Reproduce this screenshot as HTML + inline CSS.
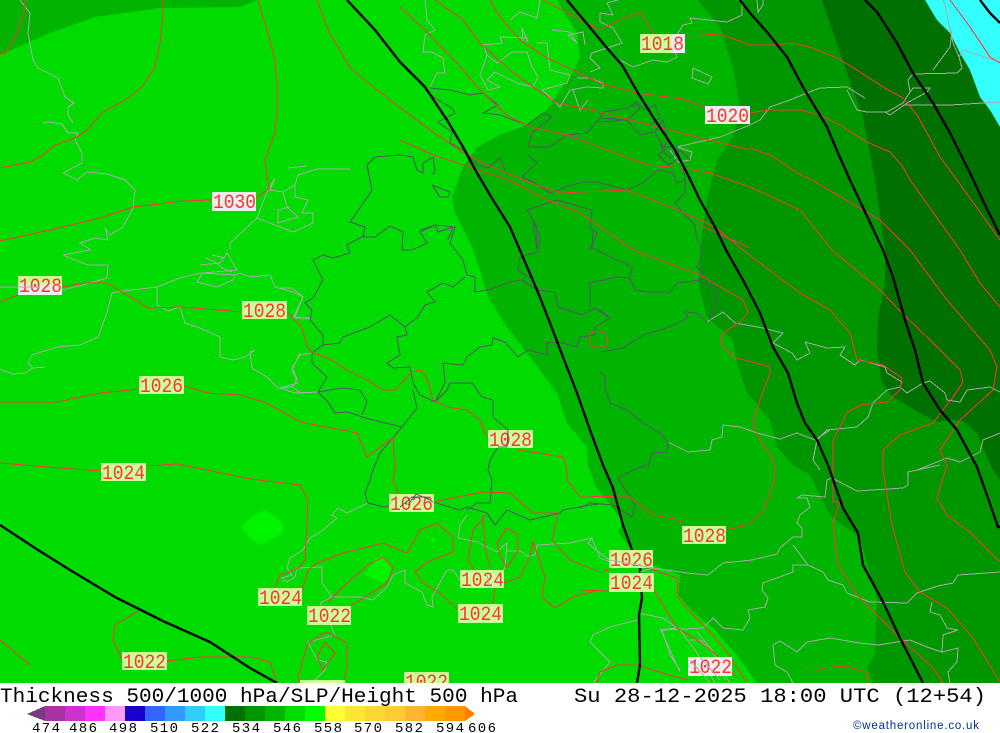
<!DOCTYPE html>
<html><head><meta charset="utf-8"><style>
html,body{margin:0;padding:0;background:#fff;width:1000px;height:733px;overflow:hidden}
svg{position:absolute;left:0;top:0;display:block}
.l text{font-family:"Liberation Mono",monospace;font-size:20px;fill:#ff3333}
.t{font-family:"Liberation Mono",monospace;font-size:20px;fill:#000}
.n{font-family:"Liberation Mono",monospace;font-size:14px;fill:#000}
</style></head><body>
<svg width="1000" height="733" viewBox="0 0 1000 733" xmlns="http://www.w3.org/2000/svg">
<svg x="0" y="0" width="1000" height="683" viewBox="0 0 1000 683">
<rect width="1000" height="683" fill="#00dc00"/>
<polygon fill="#00b400" points="0,0 257,0 240,7 160,8 95,17 50,33 0,55"/>
<polygon fill="#00b400" points="557,0 577,33 580,57 573,72 560,90 547,110 527,125 500,135 477,147 463,167 452,197 455,213 472,247 480,270 488,297 507,327 530,357 557,393 567,423 587,447 588,465 595,485 623,522 618,532 630,548 653,565 680,575 678,595 693,612 713,628 737,655 757,683 1000,683 1000,0"/>
<polygon fill="#009600" points="698,0 720,27 733,67 740,107 733,137 717,160 707,200 703,227 700,250 699,287 707,317 733,340 737,363 747,393 770,420 777,447 793,465 810,475 820,495 830,515 860,538 877,598 875,655 867,668 873,683 1000,683 1000,0"/>
<polygon fill="#007000" points="822,0 847,73 863,117 875,180 885,250 885,283 878,317 877,350 882,383 893,397 920,413 937,422 950,420 963,421 977,433 987,457 993,470 1000,480 1000,0"/>
<polygon fill="#33ffff" points="925,0 937,20 950,33 960,53 970,70 980,97 990,110 1000,127 1000,0"/>
<polygon fill="#00f400" points="241,527 250,518 265,510 283,523 283,533 260,545 250,538"/>
<polygon fill="#00f400" points="375,558 383,556 392,567 390,577 382,583 365,575"/>
<polygon fill="#00f400" points="433,537 436,540 433,543 430,540"/>

<g fill="none" stroke="#aaaaaa" stroke-width="1" shape-rendering="crispEdges">
<path d="M20 0 30 13 28 33 33 60 38 68 58 78 65 97 74 103 68 107 68 115 73 123"/>
<path d="M43 123 48 122 62 124 68 133 78 133 75 140 82 153 82 163 63 173 77 180 87 172 107 174 125 180 135 190 133 208 123 227 110 235 105 228 108 240 95 238 80 243 91 250"/>
<path d="M230 250 230 243 257 218 267 192 275 178 270 190 283 192 295 185 298 175 317 169 350 169"/>
<path d="M257 218 293 232 313 223 313 213 302 213 308 200 295 197 295 185"/>
<path d="M283 192 287 207 298 217 278 223 278 210 290 207"/>
<path d="M288 168 307 166"/>
<path d="M63 255 90 250M63 255 75 260 88 265 108 265 107 278 83 285 50 293 18 287 0 287"/>
<path d="M45 367 33 368 28 363 32 355 57 347 80 345 98 337 107 313 112 293 123 291 157 287 180 278 200 273 235 275 240 273 250 277 270 275 275 287 293 292 303 297 293 318 310 318"/>
<path d="M0 369 13 374 25 373 33 368"/>
<path d="M157 287 157 305 168 311 180 307 185 323 200 328 220 337 220 357 233 360 245 357 255 350 250 352 252 368 267 377 278 388 293 387 297 378 292 368 300 355 312 353"/>
<path d="M293 387 300 393 317 392"/>
<path d="M200 265 220 263 227 253 233 263 237 270 203 273 197 282 217 287 233 280 235 275"/>
<path d="M205 258 215 262 222 268 232 272M212 255 225 258"/>
<path d="M280 288 292 288 303 297 295 317 310 319"/>
<path d="M292 370 300 353M292 370 298 383 280 388 295 393 318 392"/>
<path d="M425 0 427 20 435 30 425 35 423 52 432 52 443 58 445 73 437 73 430 87"/>
<path d="M487 55 480 75 488 90 500 87 487 80 495 72 517 83 533 87 538 77 532 67 527 52 512 52 497 63 487 55 483 45 502 43 500 37 528 38"/>
<path d="M510 20 520 12 537 18 540 0"/>
<path d="M523 42 522 28 528 42"/>
<path d="M537 43 547 43 550 70 570 75 567 83 542 90 550 97 560 107 570 90 587 87 603 88 603 83 590 78 577 78"/>
<path d="M573 90 580 110 588 100"/>
<path d="M590 72 600 68 590 58 592 53 622 43 613 28 600 22 600 13 613 15 607 3 618 0"/>
<path d="M552 30 570 32 577 43 568 35 583 32 585 45"/>
<path d="M620 60 633 67 653 60 667 62 677 57 672 43 683 25 692 23 690 18 727 22 742 15 742 0"/>
<path d="M693 68 692 78 708 84 712 77 693 68"/>
<path d="M677 147 692 152 690 160 678 162 670 150"/>
<path d="M677 147 720 137 750 125 760 120 770 107 790 100 807 93 820 88 847 87 865 98"/>
<path d="M847 90 857 110 867 112 887 112 903 103 910 92 908 80 913 74 957 73 962 68 959 57 963 50 1000 62"/>
<path d="M952 30 950 47 933 70M945 5 943 0M945 5 953 43 959 57"/>
<path d="M885 112 890 115 907 103 927 92 930 88 913 88 910 92"/>
<path d="M905 105 950 105 1000 102"/>
<path d="M757 0 758 12 763 5 763 0"/>
<path d="M707 322 723 312 735 323 763 328 783 333 773 343 792 353 797 360 810 353 805 342 827 348 845 347 840 355 855 365 860 360 885 367 887 373 902 382 900 387 887 390 873 403 868 417 857 427 827 430 817 440 813 460 820 470"/>
<path d="M900 387 907 393 923 383 930 381 945 393 947 400 960 402 967 390 990 387 1000 392"/>
<path d="M1000 433 983 440 980 452 960 462 947 458 917 470"/>
<path d="M668 442 688 452 710 450 712 440 722 437 723 425 740 427 757 433 780 439 797 433 815 440 830 430"/>
<path d="M592 538 600 558 610 562 653 568 687 573 708 575 723 563 752 560 777 554 780 548 793 537 802 537 802 528 797 523 800 515 810 507 807 498 797 498 802 495 825 497 827 480 832 478 857 491 903 488 908 485 908 472 940 465"/>
<path d="M793 545 808 565 793 565 793 572 763 583 762 590 768 598 765 607 748 610 750 618 743 630 723 628 713 618 703 628 662 630 670 655 680 670"/>
<path d="M808 565 823 572 828 580 843 585 847 593 870 602 907 603 917 593 938 586 953 583 958 575 1000 572"/>
<path d="M932 602 930 612 940 615 947 628 958 630 943 635 942 652 958 648 957 662 948 672 950 683"/>
<path d="M773 645 775 665 787 672 793 683M773 645 780 641 797 652 807 642 830 638 860 643 878 645 910 640 927 647 942 652"/>
<path d="M638 613 663 618 677 628 660 630M590 642 593 635 610 627 637 620M590 642 610 662 593 683"/>
<path d="M660 628 680 672M680 630 695 650 705 665 715 683M697 632 712 650 722 670 730 683M690 640 700 640 715 655 725 680"/>
<path d="M368 503 347 513 338 508 332 515 337 518 323 530 310 538 303 550 290 558 287 568 292 575 282 578 287 582 295 577 297 568 322 567 322 583 332 597 320 603 330 623 335 635 308 642 317 660 327 662 325 670 315 680 316 683"/>
<path d="M330 597 360 597 373 600 387 587 393 575 405 570 405 583 422 592 427 605 433 607 432 597 447 570 453 570 460 580 488 587 505 568 507 543 497 552 477 542 458 538 460 525 467 515"/>
<path d="M507 551 520 551 527 556 535 555 537 545 570 543 592 538 588 543 600 553 612 562"/>
</g>

<g fill="none" stroke="#555566" stroke-width="1" shape-rendering="crispEdges">
<path d="M400 155 375 157 367 165 372 190 355 215 350 222 365 227 363 237 375 237 390 226 403 232 402 250 412 250 427 243 420 232 435 225 455 227 450 243 463 260 467 275 475 277 475 292 488 290 510 282 522 280 537 290 555 292 558 307 582 315 595 308 610 318 595 327 595 335 580 337 577 347 558 342 547 343 547 355 528 350 518 357 505 342 493 338 492 345 480 347 467 357 463 365 443 363 445 383 435 402 420 395 413 383 410 367 393 368 387 363 400 355 397 337 407 335 405 327 417 318 425 305 435 302 427 292 443 283 453 287 465 277"/>
<path d="M365 235 347 245 350 253 333 258 323 255 313 260 323 280 313 298 305 303 312 310 310 320 323 335 323 345 312 353 312 363 327 377 318 392 328 402 335 413 348 412 362 417 373 420 402 427 417 408 413 390"/>
<path d="M323 345 340 343 343 337 370 327 390 315 405 327"/>
<path d="M318 392 343 388 360 390 367 402 362 415"/>
<path d="M402 427 380 453 373 470 370 480 365 493 368 503 383 507 433 502 460 510 467 507 487 513 495 525 507 510 530 520 560 513 563 510 590 505 600 504 613 505 632 517 635 505 630 497 618 478 633 470 647 465"/>
<path d="M492 480 490 503 477 503 467 510"/>
<path d="M435 402 447 390 450 383 458 383 472 383 482 397 493 400 493 417 508 430 507 447 498 447 490 460 488 470 492 480"/>
<path d="M430 88 450 90 470 95 483 93 498 105 483 113 500 115 527 125 543 113 552 117 532 133 528 147 550 147 567 135 587 133 600 118 627 120 640 135 655 132 663 147 677 147 685 177 685 193 675 203 683 213 695 225 697 240 703 250 697 267 703 273 700 280"/>
<path d="M528 155 537 163 522 177 533 182 550 193 563 188 583 182 597 182 627 190 643 183 658 170 673 173 677 183 685 180"/>
<path d="M527 210 557 200 592 210 590 227 597 233 590 250"/>
<path d="M527 210 537 227 537 250 533 220M520 257 538 252 540 237 533 220"/>
<path d="M520 257 518 270 530 278"/>
<path d="M593 230 592 248 617 260 632 267 630 278 617 277 590 283 590 307"/>
<path d="M630 278 635 290 647 292 670 292 677 283 700 280 715 288 717 300 710 320"/>
<path d="M600 310 610 318"/>
<path d="M600 352 623 348 643 335 667 328 688 318 685 312 697 313 707 322"/>
<path d="M600 372 605 377 605 387 610 403 627 410 643 423 660 433 668 442 667 452 652 453 648 468"/>
<path d="M425 90 438 100 452 108 455 113 438 122 452 132 450 143 463 150 478 165 488 168 500 158 505 170"/>
<path d="M400 155 413 157 417 170 423 173 423 163 433 157 435 170 433 175"/>
<path d="M432 185 450 192 448 197 440 197 432 185"/>
<path d="M420 230 435 225 438 232 453 227 448 240"/>
<path d="M600 118 603 112 628 108 636 102 640 108 630 118 625 120 600 122M633 107 638 103 645 110 655 105 660 118 650 125M655 132 663 120 668 140 662 150 670 158 680 150 690 160"/>
<path d="M660 145 665 150 658 155 668 165 680 158"/>
<path d="M580 508 590 503 613 505"/>
</g>

<g fill="none" stroke="#ff3340" stroke-width="1" shape-rendering="crispEdges">
<path d="M25 0 24 13 17 33 5 54 0 54"/>
<path d="M162 0 163 17 160 43 155 67 142 87 122 102 103 112 87 130 75 138 55 145 43 155 30 162 0 168"/>
<path d="M258 0 267 30 275 60 278 97 275 133 265 160 268 183 270 188 256 198"/>
<path d="M212 200 183 201 133 207 100 218 50 230 0 241"/>
<path d="M317 0 328 30 350 68 390 100 433 132 462 152 487 165 528 182 560 193 627 190 673 208 715 227 743 250 773 273 800 293 830 310 850 333 857 360 883 365 902 378 900 390 887 402 860 405 847 413 833 440 833 502 840 502 833 522 837 562 857 595 897 635 933 668 943 683"/>
<path d="M400 7 425 30 457 63 480 90 507 115 530 127 567 135 607 150 648 165 683 168 710 173 750 187 800 210 832 250 880 290 902 313 933 343 960 370 963 382 953 397 943 410 933 423 900 435 883 450 883 470 892 525 905 572 920 592 947 608 973 638 1000 682"/>
<path d="M435 0 463 20 480 43 510 70 533 87 557 103 600 112 657 127 700 138 750 150"/>
<path d="M490 0 500 17 520 40 547 58 573 70 600 83 637 93 683 99 710 110"/>
<path d="M400 140 433 155 473 168 513 182 543 198 580 213 633 250 700 275 743 300 748 312 740 322 723 333 720 343 733 357 770 367 770 373 760 400 752 423 760 440 772 457 775 470 774 482 763 512 747 525 726 530"/>
<path d="M543 0 585 22 600 30 620 20 640 12 653 33"/>
<path d="M685 36 720 34 750 45 770 45 793 43 813 48 837 58 857 70 883 87 903 98 917 115 927 133 940 157 957 180 1000 240"/>
<path d="M750 113 767 110 800 110 820 115 840 125 867 142 890 152 903 167 910 180 935 215 960 250 980 283 1000 307"/>
<path d="M750 148 770 155 783 163 797 173 812 180 880 220 910 250 947 300 990 350 997 367 993 390 960 420 940 450 947 465 937 498 947 515 973 535 1000 562"/>
<path d="M750 248 700 225"/>
<path d="M950 0 970 27 990 57 1000 63"/>
<path d="M0 302 18 295M62 287 85 283 107 283 127 295 148 308 180 307 242 312"/>
<path d="M287 312 302 327 307 347 313 353 328 358 347 370 367 380 383 390 395 390 412 372 420 370 427 378 433 400 447 407 467 410 480 420 487 437"/>
<path d="M518 450 563 457 567 470 567 480 580 497 628 496 653 515 680 520 682 526"/>
<path d="M0 402 57 402 100 393 139 389"/>
<path d="M184 386 207 393 240 395 267 403 300 422 357 433 367 457 380 447 393 438 395 470 393 480 398 493"/>
<path d="M433 502 483 492 510 493 533 513 558 513 552 540 570 560 600 572 609 570"/>
<path d="M580 590 609 591"/>
<path d="M0 463 60 468 101 471M146 466 177 464 207 470 250 479 300 485 308 500 305 560 300 567 287 573 280 575 275 588"/>
<path d="M350 606 365 597 387 583 393 568 383 557 368 565 347 583 328 602"/>
<path d="M300 597 308 570 317 563 343 553 383 543 407 553 420 530 437 523 453 537 453 552 427 562 415 572 423 583 440 593 457 609"/>
<path d="M486 515 473 530 468 560 474 570M483 515 485 547 490 567"/>
<path d="M507 528 497 543 500 555 507 568M507 528 518 535 518 550 507 568"/>
<path d="M504 583 520 577 530 557 533 542 545 577 542 597 555 608 573 597 600 590"/>
<path d="M495 587 493 604"/>
<path d="M647 568 677 578 678 598 693 615 713 635 727 652 747 683"/>
<path d="M653 588 663 605 677 628 700 642 720 658 737 678"/>
<path d="M327 632 347 643 347 667 343 683M327 632 308 643 298 677 300 683"/>
<path d="M325 642 335 653 323 670 317 657 325 642"/>
<path d="M166 661 200 657 250 657 270 662 277 682M122 660 113 640 115 625 140 610"/>
<path d="M0 640 30 665"/>
<path d="M597 683 600 672 617 665 637 665 663 673 688 680"/>
<path d="M813 672 823 668 847 666 867 673 868 683"/>
<path d="M590 333 598 331 606 334 608 342 604 347 594 347 589 342 590 333"/>
</g>

<g fill="none" stroke="#000" stroke-width="2.4" stroke-linejoin="round">
<path d="M347 0 375 30 400 62 425 87 447 120 463 147 477 173 493 200 510 227 522 255 537 290 550 323 563 357 577 393 590 430 603 465 613 488 623 525 632 550 640 568 642 598 639 615 640 665 637 683"/>
<path d="M567 0 588 25 607 48 622 65 638 93 653 117 675 150 687 173 700 200 715 227 726 250 743 280 760 313 773 347 788 373 797 403 805 423 817 440 828 465 843 508 858 533 863 565 883 602 900 638 923 683"/>
<path d="M740 0 750 13 767 32 787 57 803 87 827 127 838 153 850 180 883 250 893 277 905 320 915 350 923 383 940 410 957 430 977 467 988 498 998 527 1000 527"/>
<path d="M865 0 877 12 897 43 913 73 933 103 950 133 970 173 985 205 1000 235"/>
<path d="M980 0 990 13 1000 23"/>
<path d="M0 525 35 548 70 570 115 597 165 622 210 642 250 668 277 683"/>
</g>

<g shape-rendering="crispEdges">
<rect x="640" y="34" width="32" height="19" fill="#ccff99"/><rect x="672" y="34" width="13" height="19" fill="#eeeeee"/>
<rect x="705" y="106" width="45" height="18" fill="#eeeeee"/>
<rect x="212" y="192" width="44" height="19" fill="#eeeeee"/>
<rect x="18" y="276" width="44" height="9" fill="#ccff99"/><rect x="18" y="285" width="44" height="10" fill="#eeeeee"/>
<rect x="242" y="301" width="45" height="18" fill="#ccff99"/>
<rect x="139" y="376" width="45" height="18" fill="#ccff99"/>
<rect x="101" y="463" width="45" height="18" fill="#ccff99"/>
<rect x="488" y="430" width="45" height="18" fill="#ccff99"/>
<rect x="389" y="494" width="45" height="18" fill="#ccff99"/>
<rect x="682" y="526" width="44" height="18" fill="#ccff99"/>
<rect x="609" y="550" width="44" height="18" fill="#ccff99"/>
<rect x="609" y="573" width="45" height="19" fill="#ccff99"/>
<rect x="460" y="570" width="44" height="18" fill="#ccff99"/>
<rect x="458" y="604" width="45" height="19" fill="#ccff99"/>
<rect x="258" y="588" width="44" height="18" fill="#ccff99"/>
<rect x="307" y="606" width="44" height="19" fill="#ccff99"/>
<rect x="122" y="652" width="45" height="18" fill="#ccff99"/>
<rect x="404" y="672" width="45" height="11" fill="#ccff99"/>
<rect x="688" y="657" width="44" height="19" fill="#eeeeee"/>
<rect x="300" y="680" width="45" height="3" fill="#ccff99"/>
</g>
<g class="l">
<text x="641" y="50" textLength="43" lengthAdjust="spacingAndGlyphs">1018</text>
<text x="706" y="122" textLength="43" lengthAdjust="spacingAndGlyphs">1020</text>
<text x="213" y="208" textLength="43" lengthAdjust="spacingAndGlyphs">1030</text>
<text x="19" y="292" textLength="43" lengthAdjust="spacingAndGlyphs">1028</text>
<text x="243" y="317" textLength="43" lengthAdjust="spacingAndGlyphs">1028</text>
<text x="140" y="392" textLength="43" lengthAdjust="spacingAndGlyphs">1026</text>
<text x="102" y="479" textLength="43" lengthAdjust="spacingAndGlyphs">1024</text>
<text x="489" y="446" textLength="43" lengthAdjust="spacingAndGlyphs">1028</text>
<text x="390" y="510" textLength="43" lengthAdjust="spacingAndGlyphs">1026</text>
<text x="683" y="542" textLength="43" lengthAdjust="spacingAndGlyphs">1028</text>
<text x="610" y="566" textLength="43" lengthAdjust="spacingAndGlyphs">1026</text>
<text x="610" y="589" textLength="43" lengthAdjust="spacingAndGlyphs">1024</text>
<text x="461" y="586" textLength="43" lengthAdjust="spacingAndGlyphs">1024</text>
<text x="459" y="620" textLength="43" lengthAdjust="spacingAndGlyphs">1024</text>
<text x="259" y="604" textLength="43" lengthAdjust="spacingAndGlyphs">1024</text>
<text x="308" y="622" textLength="43" lengthAdjust="spacingAndGlyphs">1022</text>
<text x="123" y="668" textLength="43" lengthAdjust="spacingAndGlyphs">1022</text>
<text x="405" y="688" textLength="43" lengthAdjust="spacingAndGlyphs">1022</text>
<text x="689" y="673" textLength="43" lengthAdjust="spacingAndGlyphs">1022</text>
</g>
<g fill="none" stroke="#555566" stroke-width="1" shape-rendering="crispEdges">
<path d="M508 430 507 447 498 447"/>
<path d="M400 507 412 497 425 497 433 502M408 505 416 494 430 500"/>
</g>
<g fill="none" stroke="#aaaaaa" stroke-width="1" shape-rendering="crispEdges">
<path d="M18 287 40 287"/>
<path d="M609 560 653 568M653 568 640 572"/>
<path d="M487 575 490 588"/>
<path d="M690 660 710 683M700 657 720 680"/>
</g>
</svg>

<text class="t" x="0" y="702" textLength="518" lengthAdjust="spacingAndGlyphs">Thickness 500/1000 hPa/SLP/Height 500 hPa</text>
<text class="t" x="574" y="702" textLength="412" lengthAdjust="spacingAndGlyphs">Su 28-12-2025 18:00 UTC (12+54)</text>

<g shape-rendering="crispEdges">
<polygon points="27,714 45,706 45,721" fill="#7a3a84"/>
<rect x="45" y="706" width="20" height="15" fill="#a832a8"/>
<rect x="65" y="706" width="20" height="15" fill="#cc33cc"/>
<rect x="85" y="706" width="20" height="15" fill="#ff33ff"/>
<rect x="105" y="706" width="20" height="15" fill="#ff99ff"/>
<rect x="125" y="706" width="20" height="15" fill="#1a00cc"/>
<rect x="145" y="706" width="20" height="15" fill="#3366ff"/>
<rect x="165" y="706" width="20" height="15" fill="#3399ff"/>
<rect x="185" y="706" width="20" height="15" fill="#33ccff"/>
<rect x="205" y="706" width="20" height="15" fill="#33ffff"/>
<rect x="225" y="706" width="20" height="15" fill="#007000"/>
<rect x="245" y="706" width="20" height="15" fill="#009600"/>
<rect x="265" y="706" width="20" height="15" fill="#00b400"/>
<rect x="285" y="706" width="20" height="15" fill="#00dc00"/>
<rect x="305" y="706" width="20" height="15" fill="#00ff00"/>
<rect x="325" y="706" width="20" height="15" fill="#ffff33"/>
<rect x="345" y="706" width="20" height="15" fill="#ffe633"/>
<rect x="365" y="706" width="20" height="15" fill="#ffd633"/>
<rect x="385" y="706" width="20" height="15" fill="#ffcc33"/>
<rect x="405" y="706" width="20" height="15" fill="#ffb433"/>
<rect x="425" y="706" width="20" height="15" fill="#ffaa00"/>
<rect x="445" y="706" width="20" height="15" fill="#ff9900"/>
<polygon points="465,706 475,714 465,721" fill="#ff8000"/>
</g>
<text class="n" x="32" y="732" textLength="28">474</text>
<text class="n" x="69" y="732" textLength="28">486</text>
<text class="n" x="109" y="732" textLength="28">498</text>
<text class="n" x="150" y="732" textLength="28">510</text>
<text class="n" x="191" y="732" textLength="28">522</text>
<text class="n" x="232" y="732" textLength="28">534</text>
<text class="n" x="273" y="732" textLength="28">546</text>
<text class="n" x="314" y="732" textLength="28">558</text>
<text class="n" x="354" y="732" textLength="28">570</text>
<text class="n" x="395" y="732" textLength="28">582</text>
<text class="n" x="436" y="732" textLength="28">594</text>
<text class="n" x="468" y="732" textLength="28">606</text>
<text x="853" y="729" textLength="126" font-family="Liberation Sans, sans-serif" font-size="11.5" fill="#003399">©weatheronline.co.uk</text>
</svg>
</body></html>
